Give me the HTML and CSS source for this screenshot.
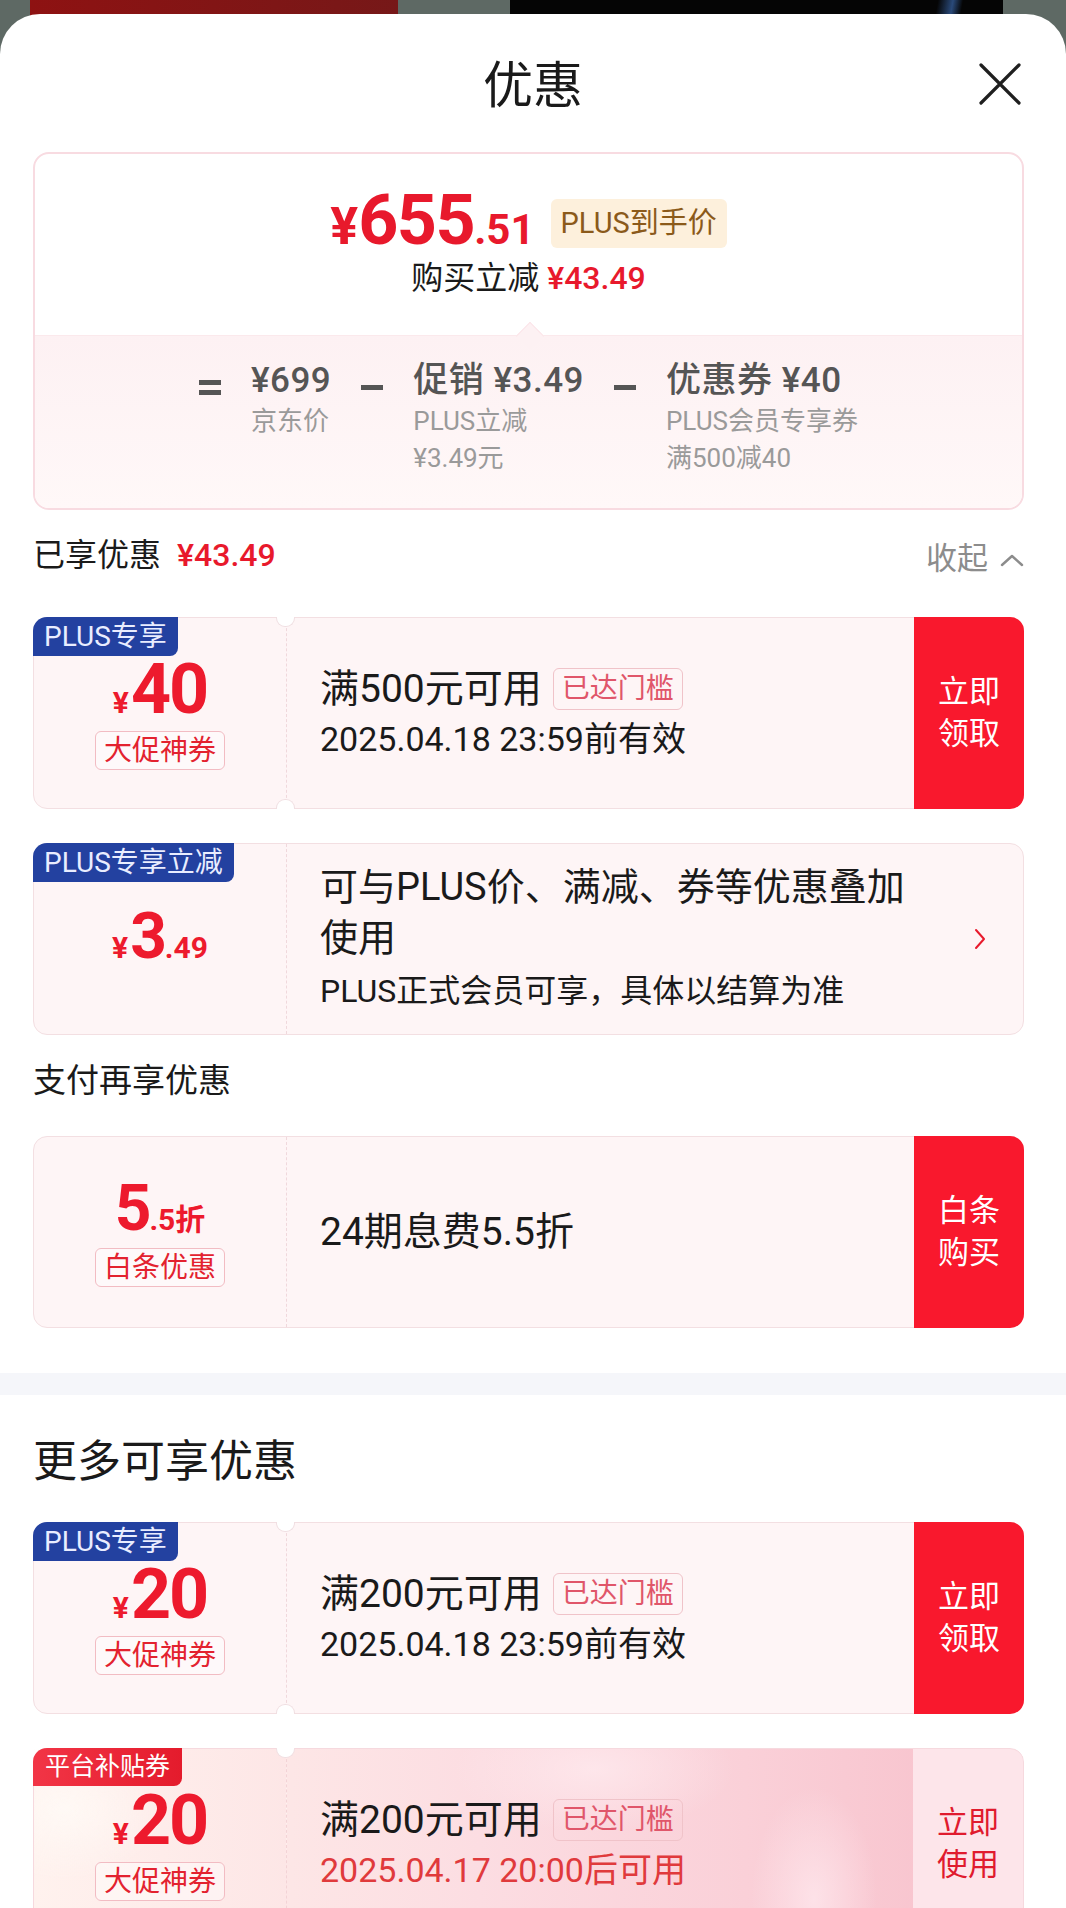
FILE: index.html
```html
<!DOCTYPE html>
<html lang="zh-CN">
<head>
<meta charset="utf-8">
<title>优惠</title>
<link rel="stylesheet" href="styles.css">
</head>
<body>
<div class="backdrop">
  <div class="bd-red"></div>
  <div class="bd-dark"></div>
</div>
<div class="sheet">
  <header class="sheet-head">
    <h1 class="sheet-title">优惠</h1>
    <button class="close" aria-label="关闭">
      <svg width="44" height="44" viewBox="0 0 44 44"><path d="M3 3 L41 41 M41 3 L3 41" stroke="#1f1f1f" stroke-width="3.2" fill="none" stroke-linecap="round"/></svg>
    </button>
  </header>

  <section class="block">
    <div class="summary">
      <div class="sum-top">
        <div class="price-row">
          <span class="price"><span class="p-yen">¥</span><span class="p-int">655</span><span class="p-dec">.51</span></span>
          <span class="plus-badge">PLUS到手价</span>
        </div>
        <div class="save-row">购买立减 <span class="save-amt">¥43.49</span></div>
      </div>
      <div class="sum-bottom">
        <div class="formula">
          <span class="op op-eq"><i></i><i></i></span>
          <div class="term">
            <div class="term-main">¥699</div>
            <div class="term-sub">京东价</div>
          </div>
          <span class="op op-minus"><i></i></span>
          <div class="term">
            <div class="term-main">促销 ¥3.49</div>
            <div class="term-sub">PLUS立减</div>
            <div class="term-sub">¥3.49元</div>
          </div>
          <span class="op op-minus"><i></i></span>
          <div class="term">
            <div class="term-main">优惠券 ¥40</div>
            <div class="term-sub">PLUS会员专享券</div>
            <div class="term-sub">满500减40</div>
          </div>
        </div>
      </div>
    </div>

    <div class="enjoyed-row">
      <div class="enjoyed">已享优惠<span class="enjoyed-amt">¥43.49</span></div>
      <div class="fold">收起
        <svg width="24" height="14" viewBox="0 0 24 14"><polyline points="2,12 12,3 22,12" fill="none" stroke="#8c8c8c" stroke-width="2.4" stroke-linecap="round" stroke-linejoin="round"/></svg>
      </div>
    </div>

    <div class="coupon coupon--ticket c1">
      <span class="cp-badge">PLUS专享</span>
      <div class="cp-left">
        <div class="cp-amt"><span class="a-yen">¥</span><span class="a-int">40</span></div>
        <span class="cp-tag">大促神券</span>
      </div>
      <div class="cp-mid">
        <div class="cp-title">满500元可用<span class="cp-reach">已达门槛</span></div>
        <div class="cp-date">2025.04.18 23:59前有效</div>
      </div>
      <div class="cp-btn">立即<br>领取</div>
    </div>

    <div class="coupon c2">
      <span class="cp-badge">PLUS专享立减</span>
      <div class="cp-left">
        <div class="cp-amt"><span class="a-yen">¥</span><span class="a-int">3</span><span class="a-dec">.49</span></div>
      </div>
      <div class="cp-mid">
        <div class="cp-title cp-title--wrap">可与PLUS价、满减、券等优惠叠加使用</div>
        <div class="cp-sub">PLUS正式会员可享，具体以结算为准</div>
      </div>
      <svg class="cp-arrow" width="14" height="22" viewBox="0 0 14 22"><polyline points="3,2 11,11 3,20" fill="none" stroke="#e8192c" stroke-width="2" stroke-linecap="round" stroke-linejoin="round"/></svg>
    </div>

    <h2 class="sub-head">支付再享优惠</h2>

    <div class="coupon c3">
      <div class="cp-left">
        <div class="cp-amt"><span class="a-int">5</span><span class="a-dec">.5</span><span class="a-unit">折</span></div>
        <span class="cp-tag">白条优惠</span>
      </div>
      <div class="cp-mid">
        <div class="cp-title">24期息费5.5折</div>
      </div>
      <div class="cp-btn">白条<br>购买</div>
    </div>
  </section>

  <div class="band"></div>

  <section class="block block--more">
    <h2 class="more-head">更多可享优惠</h2>

    <div class="coupon coupon--ticket c4">
      <span class="cp-badge">PLUS专享</span>
      <div class="cp-left">
        <div class="cp-amt"><span class="a-yen">¥</span><span class="a-int">20</span></div>
        <span class="cp-tag">大促神券</span>
      </div>
      <div class="cp-mid">
        <div class="cp-title">满200元可用<span class="cp-reach">已达门槛</span></div>
        <div class="cp-date">2025.04.18 23:59前有效</div>
      </div>
      <div class="cp-btn">立即<br>领取</div>
    </div>

    <div class="coupon coupon--ticket coupon--promo c5">
      <span class="cp-badge cp-badge--red">平台补贴券</span>
      <div class="cp-left">
        <div class="cp-amt"><span class="a-yen">¥</span><span class="a-int">20</span></div>
        <span class="cp-tag">大促神券</span>
      </div>
      <div class="cp-mid">
        <div class="cp-title">满200元可用<span class="cp-reach">已达门槛</span></div>
        <div class="cp-date cp-date--red">2025.04.17 20:00后可用</div>
      </div>
      <div class="cp-btn cp-btn--light">立即<br>使用</div>
    </div>
  </section>
</div>
</body>
</html>
```

FILE: styles.css
```css
* { box-sizing: border-box; margin: 0; padding: 0; }
html, body { overflow: hidden; }
body {
  width: 1066px;
  background: #5e6964;
  font-family: Roboto, "Noto Sans CJK SC", sans-serif;
  color: #1a1a1a;
}

/* backdrop behind the sheet */
.backdrop { height: 60px; display: flex; }
.bd-red { margin-left: 30px; width: 368px; background: linear-gradient(90deg, #8e1212, #761818); border-radius: 0 0 0 40px; }
.bd-dark { margin-left: 112px; width: 493px; background: linear-gradient(100deg, #050505 85%, #2a4a7a 88%, #050505 90%); }

.sheet {
  margin-top: -46px;
  background: #fff;
  border-radius: 40px 40px 0 0;
  position: relative;
}

.sheet-head {
  height: 138px;
  position: relative;
  display: flex;
  justify-content: center;
  padding-top: 37px;
}
.sheet-title {
  font-family: "Noto Sans CJK SC", sans-serif;
  font-size: 50px;
  font-weight: 400;
  line-height: 60px;
  color: #1a1a1a;
}
.close {
  position: absolute;
  top: 48px;
  right: 44px;
  width: 44px;
  height: 44px;
  border: 0;
  background: none;
  display: flex;
}

.block { padding: 0 42px 45px 33px; }
.block--more { padding-top: 42px; padding-bottom: 0; }

/* summary card */
.summary {
  border: 2px solid #f8dbe1;
  border-radius: 16px;
  overflow: hidden;
  height: 358px;
  display: flex;
  flex-direction: column;
}
.sum-top {
  height: 181px;
  padding-top: 36px;
  display: flex;
  flex-direction: column;
  align-items: center;
}
.price-row { display: flex; align-items: center; height: 60px; gap: 16px; }
.price { color: #e8192c; font-weight: 700; white-space: nowrap; font-size: 70px; line-height: 60px; height: 60px; }
.p-yen { font-size: 52px; line-height: 1; }
.p-int { letter-spacing: -1.5px; }
.p-dec { font-size: 42px; line-height: 1; }
.plus-badge {
  background: #fdf0dc;
  color: #8b5a1a;
  font-size: 29px;
  line-height: 49px;
  height: 49px;
  padding: 0 10px;
  border-radius: 6px;
  margin-top: 6px;
}
.save-row { margin-top: 8px; font-size: 32px; line-height: 40px; color: #1a1a1a; }
.save-amt { color: #e8192c; font-weight: 500; }

.sum-bottom {
  flex: 1;
  position: relative;
  background: linear-gradient(180deg, #fdf1f3 0%, #fff8f8 100%);
  border-top: 1px solid #fbe9ec;
  padding-top: 23px;
}
.sum-bottom::before {
  content: "";
  position: absolute;
  top: -10px;
  left: 50%;
  width: 19px;
  height: 19px;
  margin-left: -9px;
  background: #fdf1f3;
  border-top: 1px solid #fbe5e9;
  border-left: 1px solid #fbe5e9;
  transform: rotate(45deg);
}
.formula { display: flex; justify-content: center; align-items: flex-start; gap: 30px; }
.term-main { font-size: 35px; font-weight: 500; line-height: 44px; color: #555; white-space: nowrap; letter-spacing: 0.5px; }
.term-sub { font-size: 26px; line-height: 37px; color: #9a9a9a; white-space: nowrap; }
.op { height: 44px; margin-top: 6px; display: flex; flex-direction: column; justify-content: center; gap: 5px; }
.op i { display: block; width: 22px; height: 5px; background: #555; }

/* enjoyed row */
.enjoyed-row { display: flex; justify-content: space-between; padding-top: 25px; height: 65px; }
.enjoyed { font-size: 32px; line-height: 40px; color: #1a1a1a; }
.enjoyed-amt { color: #e8192c; font-weight: 500; margin-left: 16px; }
.fold { font-size: 31px; line-height: 40px; color: #8c8c8c; margin-top: 7px; display: flex; align-items: center; gap: 12px; }
.fold svg { margin-top: 2px; }

/* coupons */
.coupon {
  position: relative;
  display: flex;
  height: 192px;
  border: 1px solid #f3dfe2;
  border-radius: 14px;
  background: #fef5f6;
}
.c1 { margin-top: 42px; }
.c2 { margin-top: 34px; }
.c3 { margin-top: 35px; }
.c4 { margin-top: 35px; }
.c5 { margin-top: 34px; }

.cp-badge {
  position: absolute;
  top: -1px;
  left: -1px;
  height: 39px;
  line-height: 39px;
  padding: 0 11px;
  font-size: 28px;
  color: #e9edff;
  background: #2341a0;
  border-radius: 14px 0 8px 0;
  z-index: 2;
}
.cp-badge--red { background: linear-gradient(90deg, #f23546, #e41b2c); color: #fff; font-size: 25px; padding: 0 12px; height: 38px; line-height: 38px; }

.cp-left {
  position: relative;
  width: 253px;
  flex: none;
  border-right: 1px dashed #f0d8dc;
  display: flex;
  flex-direction: column;
  align-items: center;
  justify-content: center;
  padding-top: 4px;
}
.c2 .cp-left { padding: 0 0 10px; }
.c3 .cp-left { padding-top: 0; }
.coupon--ticket .cp-left::before,
.coupon--ticket .cp-left::after {
  content: "";
  position: absolute;
  right: -9px;
  width: 17px;
  height: 9px;
  background: #fff;
  border: 1px solid #f0dfe2;
}
.coupon--ticket .cp-left::before { top: -1px; border-top: 0; border-radius: 0 0 9px 9px; }
.coupon--ticket .cp-left::after { bottom: -1px; border-bottom: 0; border-radius: 9px 9px 0 0; }

.cp-amt { color: #ed1a2d; font-weight: 700; font-size: 70px; line-height: 58px; height: 58px; white-space: nowrap; }
.a-yen { font-size: 30px; margin-right: 2px; line-height: 1; }
.a-int { letter-spacing: -2px; }
.c2 .a-int, .c3 .a-int { font-size: 64px; }
.a-dec { font-size: 30px; line-height: 1; }
.a-unit { font-size: 30px; line-height: 1; font-family: "Noto Sans CJK SC", sans-serif; }
.cp-tag {
  margin-top: 13px;
  height: 39px;
  line-height: 37px;
  padding: 0 8px;
  font-size: 28px;
  color: #e3222f;
  border: 1px solid #f2bcc3;
  border-radius: 6px;
  background: rgba(255, 255, 255, 0.45);
}

.cp-mid {
  flex: 1;
  padding-left: 33px;
  display: flex;
  flex-direction: column;
  justify-content: center;
}
.cp-title { font-size: 39px; line-height: 46px; display: flex; align-items: center; white-space: nowrap; }
.cp-title--wrap { display: block; white-space: normal; width: 600px; line-height: 51px; font-size: 38px; }
.cp-reach {
  margin-left: 11px;
  height: 42px;
  line-height: 40px;
  padding: 0 8px;
  font-size: 28px;
  color: #e0566a;
  border: 1px solid #f0c3c9;
  border-radius: 6px;
}
.cp-date { font-size: 34px; line-height: 44px; margin-top: 5px; }
.cp-date--red { color: #e03a3c; }
.cp-sub { font-size: 32px; line-height: 50px; margin-top: 2px; }
.cp-arrow { align-self: center; margin-right: 36px; }

.cp-btn {
  width: 110px;
  flex: none;
  margin: -1px -1px -1px 0;
  border-radius: 0 14px 14px 0;
  background: #f9182d;
  color: #fff;
  font-size: 31px;
  line-height: 42px;
  display: flex;
  align-items: center;
  justify-content: center;
  text-align: center;
}
.cp-btn--light { background: #fde5ea; color: #e01b2e; margin: 0; border-radius: 0 13px 13px 0; }

.sub-head { font-size: 33px; font-weight: 400; line-height: 40px; margin-top: 26px; }

.band { height: 22px; background: #f5f6fa; }

.more-head { font-size: 44px; font-weight: 400; line-height: 50px; }

/* promo coupon */
.coupon--promo {
  border-color: #f6d9de;
  background:
    radial-gradient(ellipse 120px 60px at 1010px 0px, rgba(255,255,255,0.5), transparent 70%),
    radial-gradient(ellipse 90px 160px at 780px 150px, rgba(255,235,240,0.7), transparent 70%),
    radial-gradient(ellipse 200px 90px at 560px 20px, rgba(255,236,240,0.7), transparent 70%),
    linear-gradient(90deg, #fff2ee 0%, #fde6e6 26%, #fcdde2 45%, #fad0d8 72%, #f8c4ce 92%);
}
.coupon--promo .cp-left { background: radial-gradient(ellipse 140px 100px at 30px 60px, rgba(255,250,246,0.9), transparent 70%); border-right-color: #f3d3d6; }
```
